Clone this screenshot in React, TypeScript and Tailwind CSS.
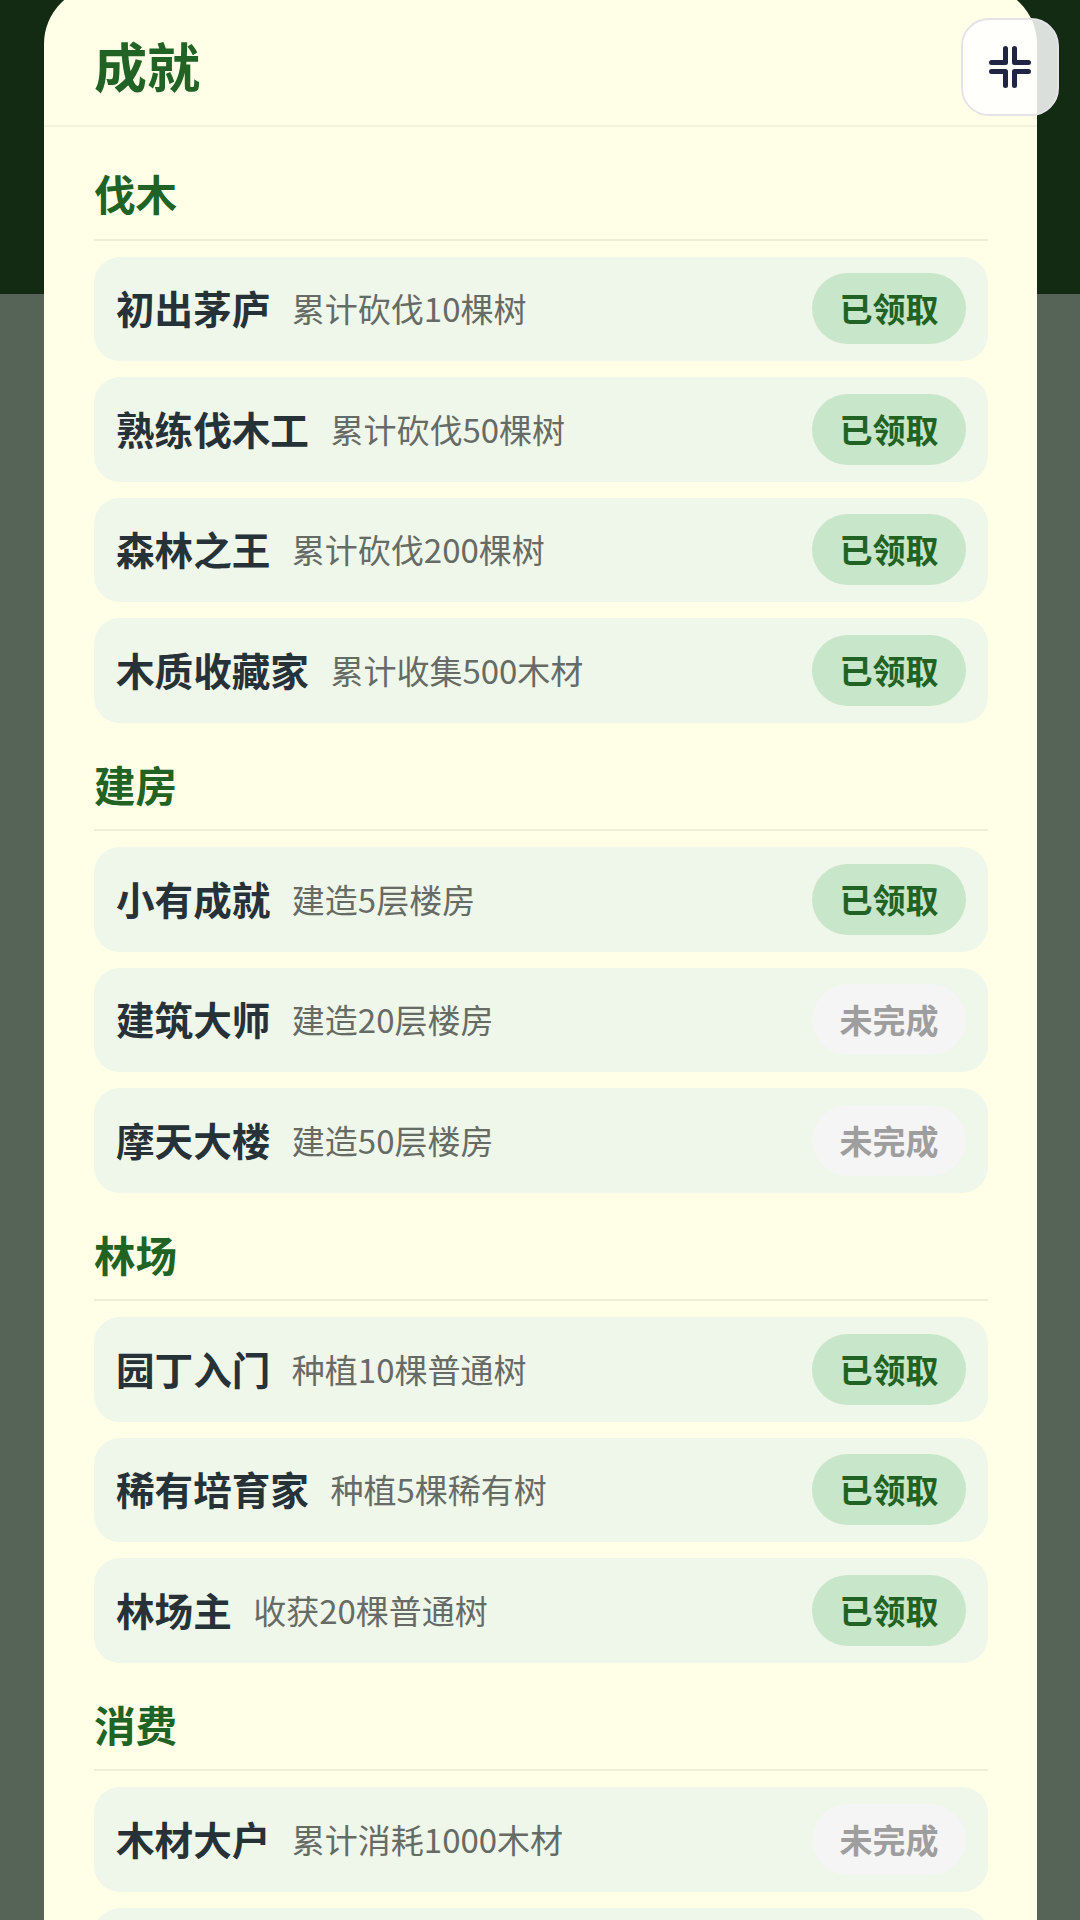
const FONT = "font-['Noto_Sans_CJK_SC','Noto_Sans',sans-serif]";

type Achievement = { name: string; desc: string; done: boolean };

const SECTIONS: { title: string; items: Achievement[]; more?: boolean }[] = [
  {
    title: "伐木",
    items: [
      { name: "初出茅庐", desc: "累计砍伐10棵树", done: true },
      { name: "熟练伐木工", desc: "累计砍伐50棵树", done: true },
      { name: "森林之王", desc: "累计砍伐200棵树", done: true },
      { name: "木质收藏家", desc: "累计收集500木材", done: true },
    ],
  },
  {
    title: "建房",
    items: [
      { name: "小有成就", desc: "建造5层楼房", done: true },
      { name: "建筑大师", desc: "建造20层楼房", done: false },
      { name: "摩天大楼", desc: "建造50层楼房", done: false },
    ],
  },
  {
    title: "林场",
    items: [
      { name: "园丁入门", desc: "种植10棵普通树", done: true },
      { name: "稀有培育家", desc: "种植5棵稀有树", done: true },
      { name: "林场主", desc: "收获20棵普通树", done: true },
    ],
  },
  {
    title: "消费",
    items: [{ name: "木材大户", desc: "累计消耗1000木材", done: false }],
    more: true,
  },
];

function Row({ item }: { item: Achievement }) {
  return (
    <div className="flex h-[104.5px] shrink-0 items-center rounded-[26px] bg-[#eff6ea] pl-[22px] pr-[22px]">
      <span className="mb-[2px] text-[38.6px] font-bold leading-none text-[#263238]">{item.name}</span>
      <span className="ml-[21.5px] text-[33px] leading-none text-[#666b66]">{item.desc}</span>
      {item.done ? (
        <span className="ml-auto flex h-[71px] w-[154px] items-center justify-center rounded-full bg-[#c8e6c9] text-[33px] font-bold text-[#206324]">
          已领取
        </span>
      ) : (
        <span className="ml-auto flex h-[71px] w-[154px] items-center justify-center rounded-full bg-[#f5f5f5] text-[33px] font-bold text-[#9e9e9e]">
          未完成
        </span>
      )}
    </div>
  );
}

export default function App() {
  return (
    <div className={`relative h-[1920px] w-[1080px] overflow-hidden bg-[#566357] ${FONT}`}>
      <div className="h-[294px] bg-[#122b12]" />

      {/* modal */}
      <div className="absolute left-[44px] top-[-14px] h-[1960px] w-[993px] rounded-t-[58px] bg-[#ffffe8]">
        <div className="flex h-[141px] items-end border-b-2 border-[#f3f3dc] pb-[18px] pl-[50px]">
          <h1 className="text-[53px] font-bold leading-[84px] text-[#206324]">成就</h1>
        </div>
        <div className="flex flex-col gap-[25.5px] pl-[50px] pr-[49px] pt-[30.5px]">
          {SECTIONS.map((section) => (
            <section key={section.title} className="flex flex-col gap-[16px]">
              <h2 className="flex h-[83px] items-center border-b-2 border-[#eeeed8] pb-[8px] text-[41.5px] font-bold leading-none text-[#206324]">
                {section.title}
              </h2>
              {section.items.map((item) => (
                <Row key={item.name} item={item} />
              ))}
              {section.more && <div className="h-[104.5px] shrink-0 rounded-[26px] bg-[#eff6ea]" />}
            </section>
          ))}
        </div>
      </div>

      {/* floating button */}
      <button
        type="button"
        className="absolute left-[961px] top-[18px] flex h-[98px] w-[98px] items-center justify-center rounded-[28px] border-2 border-[#e4e4e8] bg-white/85"
      >
        <svg width="44" height="44" viewBox="0 0 44 44" fill="none" stroke="#1f2542" strokeWidth="5" strokeLinecap="round" strokeLinejoin="round">
          <path d="M17.5 3.5v14h-14" />
          <path d="M26.5 3.5v14h14" />
          <path d="M17.5 40.5v-14h-14" />
          <path d="M26.5 40.5v-14h14" />
        </svg>
      </button>
    </div>
  );
}
